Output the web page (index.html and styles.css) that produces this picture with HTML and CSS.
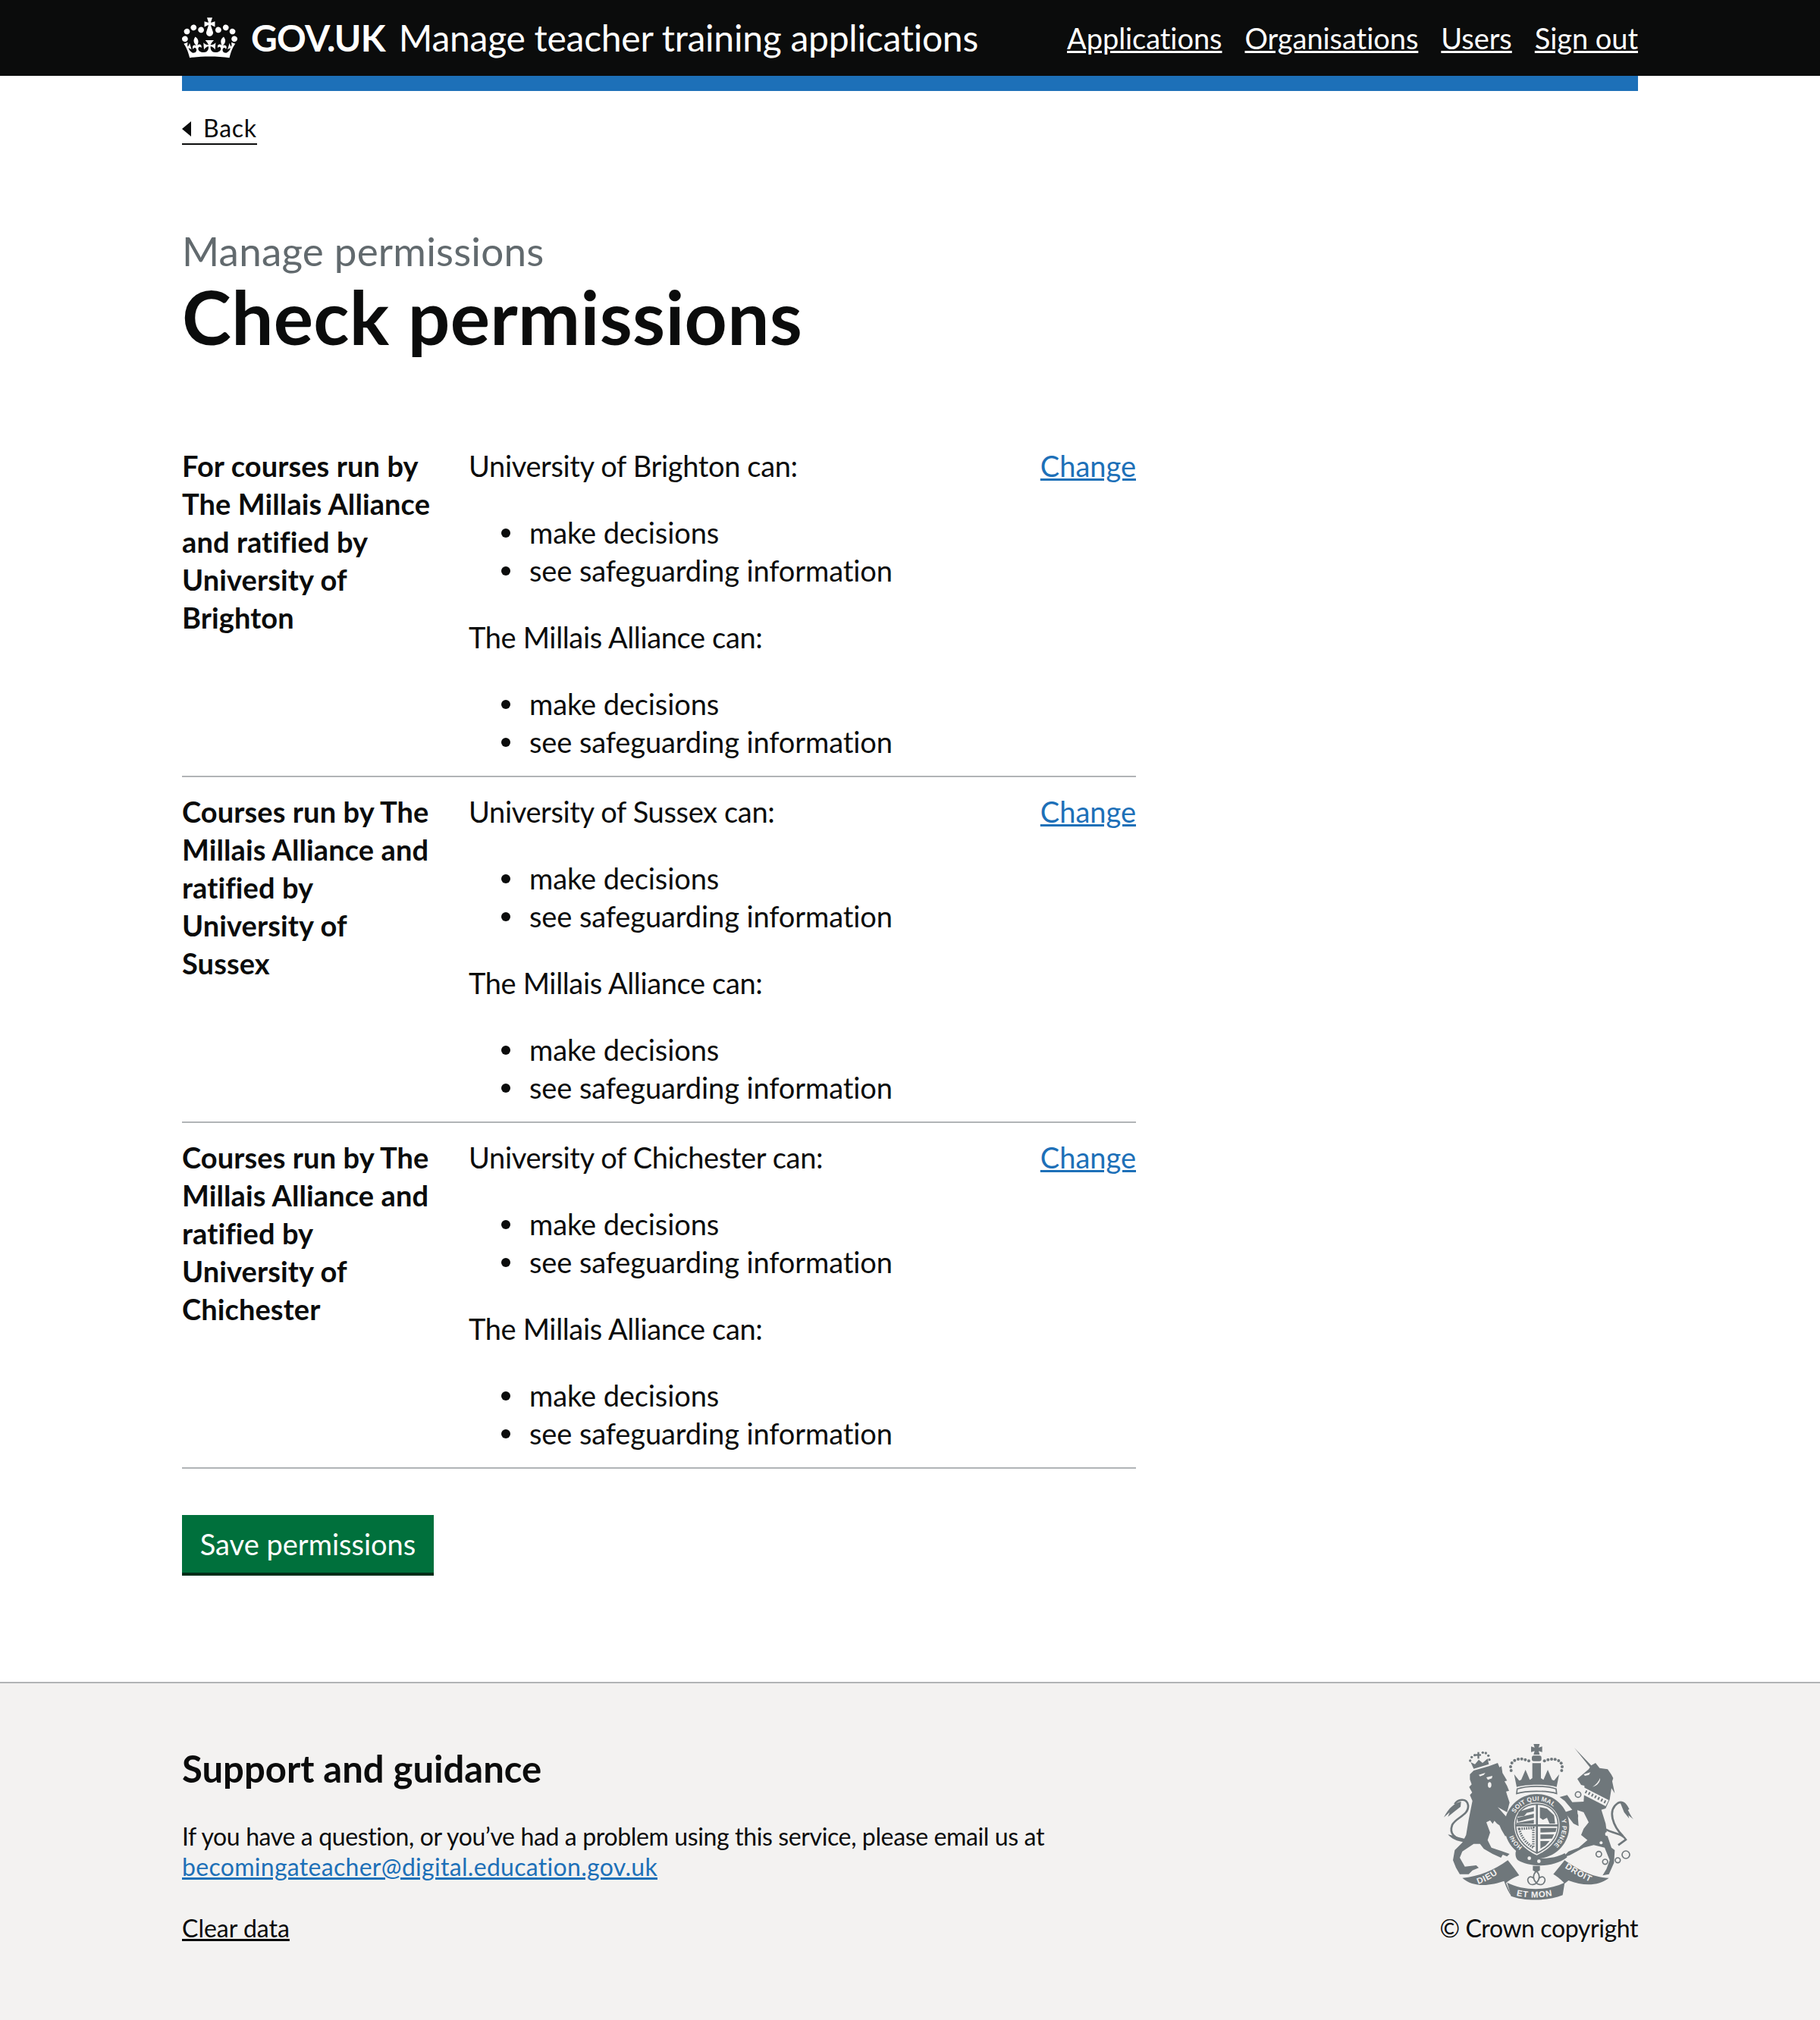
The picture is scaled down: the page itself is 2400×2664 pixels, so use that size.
FILE: index.html
```html
<!DOCTYPE html>
<html lang="en">
<head>
  <meta charset="UTF-8" />
  <title>Check permissions - Manage teacher training applications</title>
  <link rel="stylesheet" href="styles.css">
</head>
<body>
  <header class="site-header">
    <div class="container header-row">
      <a class="logo" href="#">
        <svg class="crown" viewBox="0 0 132 97" aria-hidden="true"><path fill="currentColor" fill-rule="evenodd" d="M25 30.2c3.5 1.5 7.7-.2 9.1-3.7 1.5-3.6-.2-7.8-3.9-9.2-3.6-1.4-7.6.3-9.1 3.9-1.4 3.5.3 7.5 3.9 9zM9 39.5c3.6 1.5 7.8-.2 9.2-3.7 1.5-3.6-.2-7.8-3.9-9.1-3.6-1.5-7.6.2-9.1 3.8-1.4 3.5.3 7.5 3.8 9zM4.4 57.2c3.5 1.5 7.7-.2 9.1-3.8 1.5-3.6-.2-7.7-3.9-9.1-3.5-1.5-7.6.3-9.1 3.8-1.4 3.5.3 7.6 3.9 9.1zm38.3-21.4c3.5 1.5 7.7-.2 9.1-3.8 1.5-3.6-.2-7.7-3.9-9.1-3.6-1.5-7.6.3-9.1 3.8-1.3 3.6.4 7.7 3.9 9.1zm64.4-5.6c-3.6 1.5-7.8-.2-9.1-3.7-1.5-3.6.2-7.8 3.8-9.2 3.6-1.4 7.7.3 9.2 3.9 1.3 3.5-.4 7.5-3.9 9zm15.9 9.3c-3.6 1.5-7.7-.2-9.1-3.7-1.5-3.6.2-7.8 3.7-9.1 3.6-1.5 7.7.2 9.2 3.8 1.5 3.5-.3 7.5-3.8 9zm4.7 17.7c-3.6 1.5-7.8-.2-9.2-3.8-1.5-3.6.2-7.7 3.9-9.1 3.6-1.5 7.7.3 9.2 3.8 1.3 3.5-.4 7.6-3.9 9.1zM89.3 35.8c-3.6 1.5-7.8-.2-9.2-3.8-1.4-3.6.2-7.7 3.9-9.1 3.6-1.5 7.7.3 9.2 3.8 1.4 3.6-.3 7.7-3.9 9.1zM69.7 17.7l8.9 4.7V9.3l-8.9 2.8c-.2-.3-.5-.6-.9-.9L72.4 0H59.6l3.5 11.2c-.3.3-.6.5-.9.9l-8.8-2.8v13.1l8.8-4.7c.3.3.6.7.9.9l-5 15.4v.1c-.2.8-.4 1.6-.4 2.4 0 4.1 3.1 7.5 7 8.1h.2c.3 0 .7.1 1 .1.4 0 .7 0 1-.1h.2c4-.6 7.1-4.1 7.1-8.1 0-.8-.1-1.7-.4-2.4V34l-5.1-15.4c.4-.2.7-.6 1-.9zM66 92.8c16.9 0 32.8 1.1 47.1 3.2 4-16.9 8.9-26.7 14-33.5l-9.6-3.4c1 4.9 1.1 7.2 0 10.2-1.5-1.4-3-4.3-4.2-8.7L108.6 76c2.8-2 5-3.2 7.5-3.3-4.4 9.4-10 11.9-13.6 11.2-4.3-.8-6.3-4.6-5.6-7.9 1-4.7 5.7-5.9 8-.5 4.3-8.7-3-11.4-7.6-8.8 7.1-7.2 7.9-13.5 2.1-21.1-8 6.1-8.1 12.3-4.5 20.8-4.7-5.4-12.1-2.5-9.5 6.2 3.4-5.2 7.9-2 7.2 3.1-.6 4.3-6.4 7.8-13.5 7.2-10.3-.9-10.9-8-11.2-13.8 2.5-.5 7.1 1.8 11 7.3L80.2 60c-4.1 4.4-8 5.3-12.3 5.4 1.4-4.4 8-11.6 8-11.6H55.5s6.4 7.2 7.9 11.6c-4.2-.1-8-1-12.3-5.4l1.4 16.4c3.9-5.5 8.5-7.7 10.9-7.3-.3 5.8-.9 12.8-11.1 13.8-7.2.6-12.9-2.9-13.5-7.2-.7-5 3.8-8.3 7.1-3.1 2.7-8.7-4.6-11.6-9.4-6.2 3.7-8.5 3.6-14.7-4.6-20.8-5.8 7.6-5 13.9 2.2 21.1-4.7-2.6-11.9.1-7.7 8.8 2.3-5.5 7.1-4.2 8.1.5.7 3.3-1.3 7.1-5.7 7.9-3.5.7-9-1.8-13.5-11.2 2.5.1 4.7 1.3 7.5 3.3l-4.7-15.4c-1.2 4.4-2.7 7.2-4.3 8.7-1.1-3-.9-5.3 0-10.2l-9.5 3.4c5 6.9 9.9 16.7 14 33.5 14.8-2.1 30.8-3.2 47.7-3.2z"/></svg>
        <span class="logo-text">GOV.UK</span>
      </a>
      <a class="service-name" href="#">Manage teacher training applications</a>
      <nav class="main-nav">
        <a href="#">Applications</a>
        <a href="#">Organisations</a>
        <a href="#">Users</a>
        <a href="#">Sign out</a>
      </nav>
    </div>
  </header>

  <div class="container">
    <div class="blue-bar"></div>
    <a class="back-link" href="#">Back</a>

    <main class="main">
      <span class="caption">Manage permissions</span>
      <h1>Check permissions</h1>

      <dl class="summary">
        <div class="summary-row">
          <dt>For courses run by The Millais Alliance and ratified by University of Brighton</dt>
          <dd>
            <p>University of Brighton can:</p>
            <ul>
              <li>make decisions</li>
              <li>see safeguarding information</li>
            </ul>
            <p>The Millais Alliance can:</p>
            <ul>
              <li>make decisions</li>
              <li>see safeguarding information</li>
            </ul>
          </dd>
          <a class="change" href="#">Change</a>
        </div>
        <div class="summary-row">
          <dt>Courses run by The Millais Alliance and ratified by University of Sussex</dt>
          <dd>
            <p>University of Sussex can:</p>
            <ul>
              <li>make decisions</li>
              <li>see safeguarding information</li>
            </ul>
            <p>The Millais Alliance can:</p>
            <ul>
              <li>make decisions</li>
              <li>see safeguarding information</li>
            </ul>
          </dd>
          <a class="change" href="#">Change</a>
        </div>
        <div class="summary-row">
          <dt>Courses run by The Millais Alliance and ratified by University of Chichester</dt>
          <dd>
            <p>University of Chichester can:</p>
            <ul>
              <li>make decisions</li>
              <li>see safeguarding information</li>
            </ul>
            <p>The Millais Alliance can:</p>
            <ul>
              <li>make decisions</li>
              <li>see safeguarding information</li>
            </ul>
          </dd>
          <a class="change" href="#">Change</a>
        </div>
      </dl>

      <button class="save-btn">Save permissions</button>
    </main>
  </div>

  <footer class="site-footer">
    <div class="container footer-row">
      <div class="footer-main">
        <h2>Support and guidance</h2>
        <p>If you have a question, or you’ve had a problem using this service, please email us at <a class="mail" href="#">becomingateacher@digital.education.gov.uk</a></p>
        <a class="clear" href="#">Clear data</a>
      </div>
      <div class="footer-meta">
        <svg class="crest" viewBox="0 0 780 660" aria-hidden="true">
          <defs>
            <path id="garterTop" d="M293,305 A100,100 0 0 1 467,305"/>
            <path id="garterRight" d="M477,329 A100,100 0 0 1 430,442"/>
            <path id="garterHoni" d="M323,437 A100,100 0 0 1 282,375"/>
            <path id="ribbonLeft" d="M148,585 C190,570 220,550 250,525"/>
            <path id="ribbonMid" d="M292,628 C340,642 420,640 470,622"/>
            <path id="ribbonRight" d="M490,520 C530,545 570,570 625,590"/>
          </defs>

          <g class="crest-dark">
            <!-- lion -->
            <path d="M115,150 L130,135 L190,118 L225,105 L232,122 L240,118 L244,145 L262,175 L252,178 L262,196 L270,215 L258,218 L264,238 L272,262 L262,300 L225,280 L265,325 L258,345 L285,375 L290,390 L270,385 L255,395 L240,370 L232,352 L222,345 L212,334 L205,346 L195,332 L180,340 L195,380 L185,410 L200,440 L245,455 L272,465 L262,475 L245,468 L238,480 L205,465 L170,445 L155,425 L130,425 L85,455 L75,480 L95,515 L140,510 L150,520 L125,530 L110,545 L75,545 L60,520 L48,490 L55,450 L85,420 L100,390 L110,330 L125,255 L115,232 L124,222 L112,200 L122,190 L115,170 Z"/>
            <path class="crest-line" d="M95,412 C55,405 32,385 45,350 C60,320 112,312 108,272 C102,240 65,250 55,268"/>
            <path d="M80,258 C55,262 30,285 12,320 L35,300 L28,318 L55,296 L78,278 Z"/>
            <path d="M28,388 C50,392 75,402 95,405 L90,418 C65,415 42,405 28,388 Z"/>
            <!-- lion crown -->
            <path d="M130,128 L118,102 L135,110 L150,92 L165,105 L185,88 L190,110 Z"/>
            <rect x="145" y="62" width="7" height="26"/>
            <rect x="138" y="70" width="21" height="7"/>
            <circle cx="116" cy="96" r="5"/><circle cx="122" cy="82" r="5"/><circle cx="134" cy="74" r="5"/><circle cx="166" cy="64" r="5"/><circle cx="178" cy="66" r="5"/><circle cx="188" cy="76" r="5"/><circle cx="192" cy="92" r="5"/>
            <!-- centre crown -->
            <path d="M367,30 L391,30 L387,44 L401,40 L401,62 L387,58 L391,72 L367,72 L371,58 L357,62 L357,40 L371,44 Z"/>
            <rect x="360" y="76" width="38" height="22" rx="8"/>
            <path d="M290,150 L310,175 L318,172 L335,132 L352,172 L362,165 L362,106 L396,106 L396,165 L406,172 L423,132 L440,172 L448,175 L468,150 L458,200 C420,188 338,188 300,200 Z"/>
            <path class="crest-line thin" d="M302,208 C340,194 418,194 456,208 L458,226 C420,214 338,214 300,226 Z"/>
            <circle cx="278" cy="135" r="6"/><circle cx="276" cy="120" r="6"/><circle cx="281" cy="105" r="6"/><circle cx="292" cy="95" r="6"/><circle cx="306" cy="90" r="6"/><circle cx="320" cy="89" r="6"/><circle cx="334" cy="92" r="6"/><circle cx="348" cy="97" r="6"/>
            <circle cx="410" cy="97" r="6"/><circle cx="424" cy="92" r="6"/><circle cx="438" cy="90" r="6"/><circle cx="452" cy="91" r="6"/><circle cx="466" cy="96" r="6"/><circle cx="476" cy="106" r="6"/><circle cx="480" cy="120" r="6"/><circle cx="478" cy="135" r="6"/>
            <!-- garter -->
            <path fill-rule="evenodd" d="M380,228 C452,228 508,285 508,355 C508,425 452,483 380,483 C308,483 252,425 252,355 C252,285 308,228 380,228 Z M380,262 C328,262 290,300 290,350 C290,410 335,450 380,470 C425,450 470,410 470,350 C470,300 432,262 380,262 Z"/>
            <path d="M300,448 C330,478 420,500 490,462 L500,478 C440,525 345,515 305,490 C295,480 292,462 300,448 Z"/>
            <!-- shield quarters -->
            <path class="crest-line thin" d="M296,350 C296,300 330,268 380,268 C430,268 464,300 464,350 C464,405 425,440 380,462 C335,440 296,405 296,350 Z"/>
            <path class="crest-line" d="M380,268 L380,462 M296,352 L464,352"/>
            <path d="M308,298 L368,280 L368,296 L340,302 L330,314 L304,318 Z M302,322 L368,306 L368,322 L340,328 L305,338 Z M300,342 L368,330 L368,345 L300,347 Z"/>
            <path d="M392,280 L420,286 L448,312 L452,345 L430,345 L420,322 L404,330 L392,322 Z"/>
            <path d="M394,362 L458,362 L454,378 L394,380 Z M394,388 L448,388 L440,404 L394,406 Z M394,414 L430,414 L414,432 L394,444 Z"/>
            <path class="crest-harp" d="M310,366 L366,362 L366,440 C340,425 318,400 310,366 Z"/>
            <!-- fleur under the shield -->
            <path d="M364,512 L392,512 L392,530 L378,538 L364,530 Z"/>
            <path class="crest-line thin" d="M378,532 C395,550 392,565 378,580 C364,565 361,550 378,532 Z M368,562 C350,545 336,565 350,582 C358,590 372,586 378,580 C384,586 398,590 406,582 C420,565 406,545 388,562"/>
            <!-- ribbon -->
            <path d="M85,560 C150,555 210,530 265,490 C285,515 300,535 310,550 C285,560 270,570 258,580 L280,632 C270,620 260,600 250,572 C200,590 130,600 85,560 Z"/>
            <path d="M262,578 C330,612 420,612 490,578 L482,628 C425,652 330,652 278,632 Z"/>
            <path d="M445,545 L490,490 C530,520 600,560 665,560 C625,590 570,595 505,570 L490,582 C480,570 462,555 445,545 Z"/>
          </g>

          <g class="crest-dark" transform="translate(390 0)">
            <!-- unicorn -->
            <path d="M138,45 L205,115 L222,105 L238,125 L270,130 L284,150 L292,165 L288,178 L298,225 L285,205 L278,250 L262,285 L245,290 L262,345 L268,390 L285,440 L298,450 L295,500 L275,545 L250,550 L265,525 L278,490 L258,440 L215,430 L175,440 L120,470 L90,480 L115,455 L155,440 L190,410 L165,390 L175,365 L195,340 L175,300 L150,292 L155,355 L135,345 L100,300 L130,290 L100,255 L80,240 L110,232 L130,260 L175,258 L178,210 L178,195 L165,192 L150,168 L195,130 L200,122 Z"/>
            <path class="crest-line" d="M262,368 C295,385 330,385 342,408 L312,430 M332,396 C290,355 268,292 310,264 C330,254 342,268 352,290"/>
            <path d="M318,258 C345,262 350,300 372,328 L352,312 L355,325 L335,300 Z"/>
          </g>

          <g class="crest-light">
            <!-- lion face -->
            <path d="M150,152 L176,144 L170,152 L155,158 Z"/>
            <ellipse cx="193" cy="192" rx="7" ry="11"/>
            <path d="M180,162 L204,156 L202,166 L186,172 Z"/>
            <!-- unicorn face and collar -->
            <path d="M565,150 L592,142 L586,152 L570,156 Z"/>
            <path d="M630,165 C632,178 620,195 600,200 C615,190 624,178 630,165 Z"/>
            <path d="M566,202 L664,252 L652,276 L558,228 Z"/>
            <!-- belt studs -->
            <circle cx="350" cy="482" r="7"/><circle cx="388" cy="494" r="7"/>
            <!-- unicorn spots -->
            <circle cx="658" cy="386" r="8"/><circle cx="634" cy="421" r="6"/><circle cx="665" cy="340" r="11"/>

            <text class="crest-text garter"><textPath href="#garterTop">SOIT QUI MAL</textPath></text>
            <text class="crest-text garter"><textPath href="#garterRight">Y PENSE</textPath></text>
            <text class="crest-text garter-short"><textPath href="#garterHoni">HONI</textPath></text>
            <text class="crest-text ribbon"><textPath href="#ribbonLeft">DIEU</textPath></text>
            <text class="crest-text ribbon"><textPath href="#ribbonMid" startOffset="4%">ET MON</textPath></text>
            <text class="crest-text ribbon"><textPath href="#ribbonRight">DROIT</textPath></text>
          </g>

          <!-- collar points, on top of the light band -->
          <path class="crest-collar" d="M572,218 L652,260"/>

          <g class="crest-rings">
            <circle cx="543" cy="230" r="11"/><circle cx="530" cy="315" r="11"/>
            <circle cx="625" cy="466" r="11"/><circle cx="650" cy="496" r="10"/><circle cx="700" cy="490" r="10"/><circle cx="732" cy="468" r="15"/>
          </g>
        </svg>
        <span class="copyright">© Crown copyright</span>
      </div>
    </div>
  </footer>
</body>
</html>
```

FILE: styles.css
```css
* {
  box-sizing: border-box;
}

body {
  margin: 0;
  font-family: Lato, 'Noto Sans', sans-serif;
  font-size: 38px;
  line-height: 50px;
  color: #0b0c0c;
  background: #fff;
}

a {
  color: inherit;
}

.container {
  width: 1920px;
  margin: 0 auto;
}

.site-header {
  background: #0b0c0c;
  color: #fff;
  height: 100px;
}

.header-row {
  display: flex;
  align-items: center;
  height: 100px;
}

.logo {
  display: flex;
  align-items: center;
  color: #fff;
  text-decoration: none;
}

.crown {
  width: 73px;
  height: 54px;
  margin-right: 18px;
}

.logo-text {
  font-size: 48px;
  font-weight: 700;
  letter-spacing: -0.8px;
}

.service-name {
  margin-left: 18px;
  font-size: 48px;
  letter-spacing: -0.25px;
  color: #fff;
  text-decoration: none;
}

.main-nav {
  display: flex;
  gap: 30px;
  margin-left: auto;
  letter-spacing: -0.05px;
}

.main-nav a {
  color: #fff;
}

.blue-bar {
  height: 20px;
  background: #1d70b8;
}

.back-link {
  display: inline-block;
  position: relative;
  margin-top: 29px;
  padding-left: 28px;
  font-size: 32px;
  line-height: 40px;
  letter-spacing: 0.7px;
  border-bottom: 2px solid #0b0c0c;
  text-decoration: none;
}

.back-link::before {
  content: "";
  position: absolute;
  left: 0;
  top: 11px;
  border-style: solid;
  border-width: 10px 12px 10px 0;
  border-color: transparent #0b0c0c transparent transparent;
}

.main {
  padding-top: 110px;
  padding-bottom: 144px;
}

.caption {
  display: block;
  margin-bottom: 6px;
  font-size: 53px;
  line-height: 60px;
  letter-spacing: 0.2px;
  color: #626a6e;
}

h1 {
  margin: 0 0 102px;
  font-size: 98px;
  line-height: 100px;
  font-weight: 700;
  letter-spacing: 0.3px;
}

.summary {
  width: 1258px;
  margin: 0 0 61px;
}

.summary-row {
  display: flex;
  padding: 20px 0;
  border-bottom: 2px solid #b1b4b6;
}

.summary-row dt {
  width: 378px;
  padding-right: 40px;
  font-weight: 700;
  letter-spacing: 0.1px;
}

.summary-row dd {
  flex: 1;
  margin: 0;
}

.summary-row p {
  margin: 0 0 38px;
  letter-spacing: -0.35px;
}

.summary-row ul {
  margin: 0 0 38px;
  padding-left: 80px;
  list-style: none;
}

.summary-row ul:last-child {
  margin-bottom: 0;
}

.summary-row li {
  position: relative;
  letter-spacing: -0.1px;
}

.summary-row li::before {
  content: "";
  position: absolute;
  left: -37px;
  top: 20px;
  width: 12px;
  height: 12px;
  border-radius: 50%;
  background: #0b0c0c;
}

.change {
  color: #1d70b8;
}

.save-btn {
  display: block;
  width: 332px;
  height: 76px;
  padding: 0;
  border: 0;
  background: #00703c;
  box-shadow: 0 4px 0 #002d18;
  color: #fff;
  font: inherit;
}

.site-footer {
  height: 446px;
  background: #f3f2f1;
  border-top: 2px solid #b1b4b6;
}

.footer-row {
  display: flex;
  justify-content: space-between;
  padding-top: 70px;
}

.footer-main {
  padding-top: 12px;
}

.footer-main h2 {
  margin: 0 0 40px;
  font-size: 49px;
  line-height: 60px;
  font-weight: 700;
}

.footer-main p {
  width: 1200px;
  margin: 0 0 41px;
  font-size: 32px;
  line-height: 40px;
  letter-spacing: -0.37px;
}

.footer-main a {
  font-size: 32px;
  line-height: 40px;
}

.footer-main .mail {
  display: block;
  letter-spacing: 0.3px;
  color: #1d70b8;
}

.footer-main .clear {
  display: block;
}

.footer-meta {
  display: flex;
  flex-direction: column;
  align-items: flex-end;
  font-size: 32px;
  line-height: 40px;
  letter-spacing: -0.4px;
}

.crest {
  width: 260px;
  height: 220px;
  margin-bottom: 13px;
}

.crest-dark {
  fill: #6f777b;
}

.crest-line {
  fill: none;
  stroke: #6f777b;
  stroke-width: 8;
}

.crest-line.thin {
  stroke-width: 5;
}

.crest-harp {
  fill: none;
  stroke: #6f777b;
  stroke-width: 10;
  stroke-dasharray: 5 4;
}

.crest-collar {
  fill: none;
  stroke: #6f777b;
  stroke-width: 12;
  stroke-dasharray: 6 8;
}

.crest-light {
  fill: #f3f2f1;
}

.crest-rings {
  fill: none;
  stroke: #6f777b;
  stroke-width: 5;
}

.crest-text {
  font-family: 'Liberation Sans', sans-serif;
  font-weight: 700;
  letter-spacing: 0;
}

.crest-text.garter {
  font-size: 25px;
  letter-spacing: 0.5px;
}

.crest-text.garter-short {
  font-size: 24px;
}

.crest-text.ribbon {
  font-size: 34px;
  letter-spacing: 2px;
}
```
